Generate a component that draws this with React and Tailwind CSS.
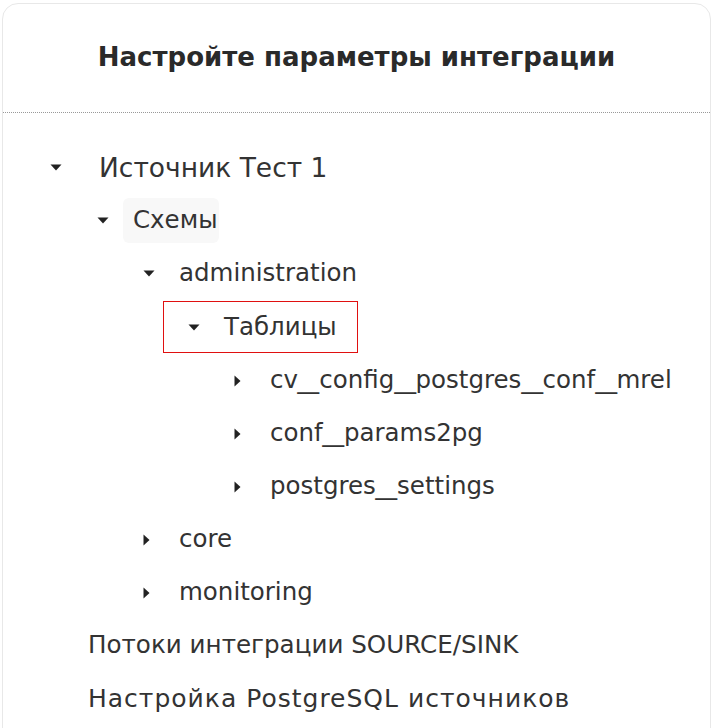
import { Fragment } from "react";

const FONT = { fontFamily: "'DejaVu Sans', 'Noto Sans', sans-serif" };

function CaretDown() {
  return (
    <svg width="12" height="7" viewBox="0 0 12 7" className="block">
      <path d="M0.5 0.5 L11.5 0.5 L6 6.5 Z" fill="#222" />
    </svg>
  );
}

function CaretRight() {
  return (
    <svg width="7" height="12" viewBox="0 0 7 12" className="block">
      <path d="M0.5 0.5 L6.5 6 L0.5 11.5 Z" fill="#222" />
    </svg>
  );
}

// the reference font draws a longer underscore
function Name({ text }) {
  const parts = text.split("_");
  return parts.map((p, i) => (
    <Fragment key={i}>
      {p}
      {i < parts.length - 1 && <span className="inline-block scale-x-[1.75] mx-[4.5px]">_</span>}
    </Fragment>
  ));
}

function Row({ indent, caret, gap = "w-[36px]", children, size = "text-[24.5px]" }) {
  return (
    <div className={`flex items-center h-[53px] ${indent}`}>
      {caret && (
        <span className={`flex items-center shrink-0 ${gap}`}>
          {caret === "down" ? <CaretDown /> : <CaretRight />}
        </span>
      )}
      <span className={`${size} text-[#333] whitespace-nowrap`}>{children}</span>
    </div>
  );
}

export default function App() {
  return (
    <div className="w-[714px] h-[728px] bg-white overflow-hidden pt-[3px] pl-[2px] pr-[3px]" style={FONT}>
      <div className="h-[760px] border border-[#e8e8e8] rounded-2xl bg-white">
        <div className="h-[109px] flex items-center justify-center border-b border-dotted border-[#999]">
          <h1 className="text-[26px] font-semibold text-[#2a2a2a] mt-[-1px]">
            Настройте параметры интеграции
          </h1>
        </div>

        <div className="pt-[28px]">
          <Row indent="pl-[47px]" caret="down" gap="w-[49px]" size="text-[26.5px]">
            Источник Тест 1
          </Row>
          <div className="flex items-center h-[53px] pl-[94px]">
            <span className="flex items-center shrink-0 w-[26px]">
              <CaretDown />
            </span>
            <span className="text-[24.5px] text-[#333] bg-[#f8f8f8] rounded-md pl-[10px] pr-[1px] h-[45px] flex items-center">
              Схемы
            </span>
          </div>
          <Row indent="pl-[140px]" caret="down">administration</Row>
          <div className="h-[54px] flex items-center pl-[160px]">
            <div className="flex items-center h-[52px] border border-[#e01010] pl-[24px] pr-[20px]">
              <span className="flex items-center shrink-0 w-[36px]">
                <CaretDown />
              </span>
              <span className="text-[24.5px] text-[#333]">Таблицы</span>
            </div>
          </div>
          {["cv_config_postgres_conf_mrel", "conf_params2pg", "postgres_settings"].map((t) => (
            <Fragment key={t}>
              <Row indent="pl-[231px]" caret="right">
                <Name text={t} />
              </Row>
            </Fragment>
          ))}
          <Row indent="pl-[140px]" caret="right">core</Row>
          <Row indent="pl-[140px]" caret="right">monitoring</Row>
          <Row indent="pl-[85px]" size="text-[24.6px]">Потоки интеграции SOURCE/SINK</Row>
          <Row indent="pl-[85px]" size="text-[25px] tracking-[1px]">Настройка PostgreSQL источников</Row>
        </div>
      </div>
    </div>
  );
}
